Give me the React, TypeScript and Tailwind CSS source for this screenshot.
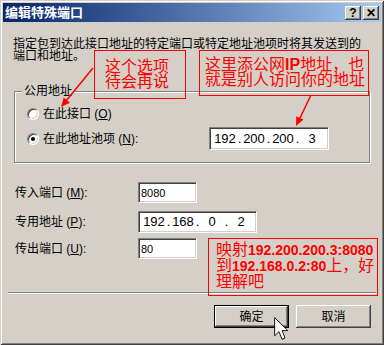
import React from "react";

const sunken =
	"border border-t-[#808080] border-l-[#808080] border-b-white border-r-white shadow-[inset_1px_1px_0_#404040,inset_-1px_-1px_0_#d4d0c8] bg-white";

const IpBox: React.FC<{parts: string[]; className: string}> = ({parts, className}) => (
	<div className={`flex items-center pl-[4px] text-[13px] ${sunken} ${className}`}>
		{parts.map((p, i) => (
			<React.Fragment key={i}>
				{i > 0 && <span className="w-[7px] text-center">.</span>}
				<span className="w-[22px] text-center">{p}</span>
			</React.Fragment>
		))}
	</div>
);

const Radio: React.FC<{checked?: boolean}> = ({checked}) => (
	<span className={`flex items-center justify-center w-[12px] h-[12px] rounded-full ${sunken}`}>
		{checked && <span className="w-[4px] h-[4px] rounded-full bg-black" />}
	</span>
);

const Key: React.FC<{k: string}> = ({k}) => (
	<>
		{" ("}
		<span className="underline underline-offset-1">{k}</span>
		{")"}
	</>
);

const FieldRow: React.FC<{label: string; k: string; className: string; children: React.ReactNode}> = ({
	label,
	k,
	className,
	children,
}) => (
	<div className={`flex items-center ${className}`}>
		<span className="w-[125px] pl-[2px]">
			{label}
			<Key k={k} />:
		</span>
		{children}
	</div>
);

const TitleButton: React.FC<{children: React.ReactNode}> = ({children}) => (
	<span className="flex items-center justify-center w-[16px] h-[14px] bg-[#d4d0c8] text-black text-[12px] font-bold leading-none shadow-[inset_-1px_-1px_0_#404040,inset_1px_1px_0_#fff,inset_-2px_-2px_0_#808080]">
		{children}
	</span>
);

export default function App() {
	return (
		<div className="relative w-[384px] h-[345px] overflow-hidden bg-[#d4d0c8] p-[3px] text-[12px] leading-[12px] text-black font-['Liberation_Sans','Noto_Sans_CJK_SC',sans-serif] shadow-[inset_1px_1px_0_#d4d0c8,inset_-1px_-1px_0_#404040,inset_2px_2px_0_#fff,inset_-2px_-2px_0_#808080]">
			{/* title bar */}
			<div className="flex items-center justify-between h-[19px] pl-[2px] pr-[2px] bg-gradient-to-r from-[#0a246a] to-[#a6caf0]">
				<span className="text-white font-bold text-[13px] leading-[13px]">编辑特殊端口</span>
				<div className="flex gap-[2px]">
					<TitleButton>?</TitleButton>
					<TitleButton>✕</TitleButton>
				</div>
			</div>

			<div className="flex flex-col px-[10px]">
				<p className="mt-[16px]">
					指定包到达此接口地址的特定端口或特定地址池项时将其发送到的
					<br />
					端口和地址。
				</p>

				{/* group box */}
				<div className="relative mt-[29px] mx-[1px] h-[72px] border border-[#808080] shadow-[1px_1px_0_#fff,inset_1px_1px_0_#fff]">
					<span className="absolute left-[7px] -top-[8px] px-[2px] bg-[#d4d0c8] leading-[14px]">公用地址</span>
					<div className="flex flex-col pt-[14px] pl-[12px]">
						<div className="flex items-center gap-[4px] h-[16px]">
							<Radio />
							<span>
								在此接口
								<Key k="O" />
							</span>
						</div>
						<div className="flex items-center mt-[5px] h-[23px]">
							<div className="flex items-center gap-[4px] w-[182px]">
								<Radio checked />
								<span>
									在此地址池项
									<Key k="N" />:
								</span>
							</div>
							<IpBox parts={["192", "200", "200", "3"]} className="w-[120px] h-[23px]" />
						</div>
					</div>
				</div>

				<FieldRow label="传入端口" k="M" className="mt-[19px] h-[21px]">
					<div className={`flex items-center w-[59px] h-[21px] pl-[2px] text-[11px] ${sunken}`}>8080</div>
				</FieldRow>
				<FieldRow label="专用地址" k="P" className="mt-[8px] h-[22px]">
					<IpBox parts={["192", "168", "0", "2"]} className="w-[119px] h-[22px]" />
				</FieldRow>
				<FieldRow label="传出端口" k="U" className="mt-[5px] h-[21px]">
					<div className={`flex items-center w-[59px] h-[21px] pl-[2px] text-[11px] ${sunken}`}>80</div>
				</FieldRow>

				<div className="mt-[33px] -mx-[5px] h-[2px] border-t border-t-[#808080] border-b border-b-white" />

				<div className="flex justify-end gap-[7px] mt-[11px]">
					<button className="w-[75px] h-[23px] bg-[#d4d0c8] border border-black shadow-[inset_-1px_-1px_0_#404040,inset_1px_1px_0_#fff,inset_-2px_-2px_0_#808080]">
						确定
					</button>
					<button className="w-[75px] h-[23px] bg-[#d4d0c8] shadow-[inset_-1px_-1px_0_#404040,inset_1px_1px_0_#fff,inset_-2px_-2px_0_#808080]">
						取消
					</button>
				</div>
			</div>

			{/* red annotations */}
			<div className="absolute left-[94px] top-[50px] w-[92px] h-[49px] border border-[#ff0000] pl-[10px] pt-[8px] text-[16px] leading-[15px] text-[#ff0000] whitespace-nowrap">
				这个选项
				<br />
				待会再说
			</div>
			<div className="absolute left-[199px] top-[50px] w-[170px] h-[46px] border border-[#ff0000] pl-[5px] pt-[6px] text-[16px] leading-[15px] text-[#ff0000] whitespace-nowrap">
				这里添公网<b>IP</b>地址，也
				<br />
				就是别人访问你的地址
			</div>
			<div className="absolute left-[208px] top-[238px] w-[170px] h-[58px] border border-[#ff0000] pl-[7px] pt-[3px] text-[16px] leading-[15px] text-[#ff0000] whitespace-nowrap">
				映射<b className="text-[14px]">192.200.200.3:8080</b>
				<br />
				到<b className="text-[14px]">192.168.0.2:80</b>上，好
				<br />
				理解吧
			</div>

			<svg className="absolute inset-0 pointer-events-none" width="384" height="345" viewBox="0 0 384 345">
				<line x1="93" y1="68" x2="66" y2="101" stroke="#ff0000" strokeWidth="1.5" />
				<polygon points="61,107 69.9,102.7 63.7,97.5" fill="#ff0000" />
				<line x1="311" y1="95" x2="300" y2="118" stroke="#ff0000" strokeWidth="1.5" />
				<polygon points="296,126 303.5,119.6 296.3,116.2" fill="#ff0000" />
			</svg>

			{/* mouse pointer */}
			<svg className="absolute left-[272px] top-[317px]" width="19" height="24" viewBox="0 0 13 21">
				<path d="M0.5 0.5 L0.5 16.5 L4.3 12.8 L7 19.5 L9.6 18.4 L7 11.9 L12 11.9 Z" fill="#fff" stroke="#000" strokeWidth="0.8" strokeLinejoin="miter" />
			</svg>
		</div>
	);
}
